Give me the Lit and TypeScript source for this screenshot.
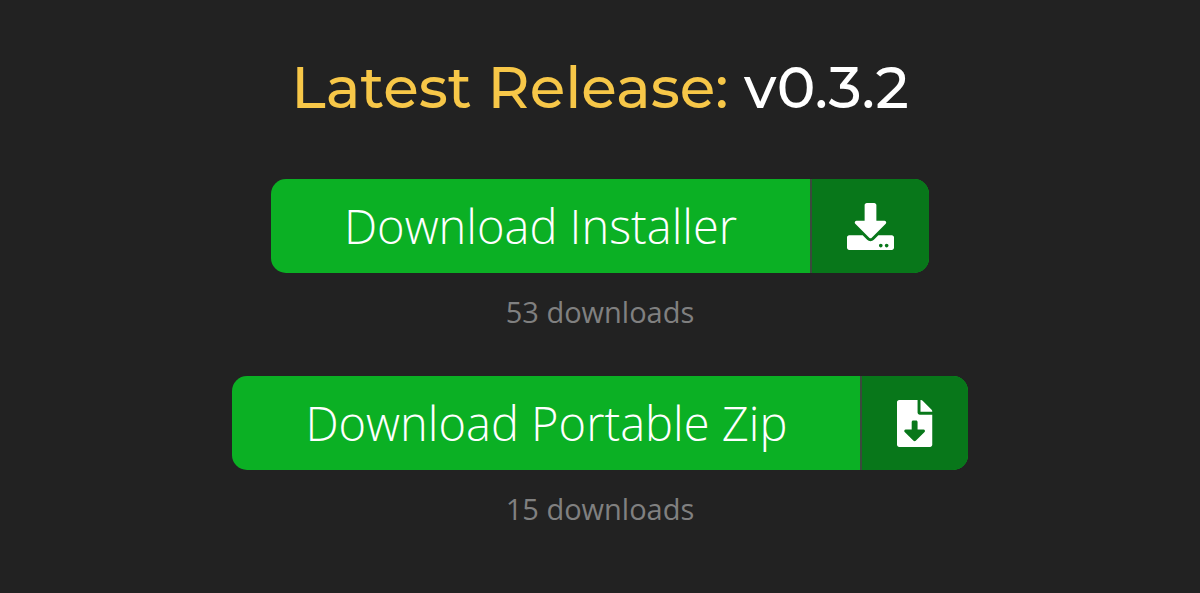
import { LitElement, html, css, svg } from "lit";
import { customElement, property } from "lit/decorators.js";

const driveIcon = svg`<path d="M216 0h80c13.300 0 24 10.700 24 24v168h87.700c17.800 0 26.700 21.500 14.100 34.100L269.700 378.300c-7.500 7.500-19.800 7.500-27.300 0L90.100 226.100c-12.600-12.600-3.700-34.100 14.100-34.100H192V24c0-13.300 10.700-24 24-24zm296 376v112c0 13.300-10.700 24-24 24H24c-13.300 0-24-10.700-24-24V376c0-13.300 10.700-24 24-24h146.700l49 49c20.100 20.100 52.500 20.100 72.600 0l49-49H488c13.300 0 24 10.700 24 24zm-124 88c0-11-9-20-20-20s-20 9-20 20 9 20 20 20 20-9 20-20zm64 0c0-11-9-20-20-20s-20 9-20 20 9 20 20 20 20-9 20-20z"/>`;
const fileIcon = svg`<path d="M224 136V0H24C10.700 0 0 10.700 0 24v464c0 13.300 10.700 24 24 24h336c13.300 0 24-10.700 24-24V160H248c-13.200 0-24-10.800-24-24zm76.450 211.360-96.420 95.700c-6.650 6.610-17.390 6.610-24.040 0l-96.420-95.700C73.420 337.290 80.540 320 94.820 320H160v-80c0-8.840 7.160-16 16-16h32c8.840 0 16 7.160 16 16v80h65.180c14.280 0 21.400 17.290 11.270 27.360zM377 105L279.100 7c-4.500-4.500-10.600-7-17-7H256v128h128v-6.100c0-6.300-2.500-12.400-7-16.900z"/>`;

@customElement("download-option")
class DownloadOption extends LitElement {
  @property() label = "";
  @property() kind = "drive";
  @property({ type: Number }) count = 0;

  static styles = css`
    :host { display: flex; flex-direction: column; align-items: center; }
    .button {
      display: flex;
      border-radius: 15px;
      overflow: hidden;
      color: #fff;
      text-decoration: none;
      background: #0bb024;
    }
    .label { padding: 0 73px; font-size: 47px; font-weight: 300; line-height: 94px; white-space: nowrap; }
    .icon {
      display: flex;
      align-items: center;
      padding: 0 35px;
      border-left: 2px solid #3a4a3c;
      background: #08771a;
    }
    svg { display: block; height: 47px; fill: currentColor; }
    .count { margin: 20px 0 0; font-size: 29px; line-height: 38px; color: #808080; }
  `;

  render() {
    const drive = this.kind === "drive";
    return html`
      <a class="button" href="#${this.kind}">
        <span class="label">${this.label}</span>
        <span class="icon">
          <svg viewBox=${drive ? "0 0 512 512" : "0 0 384 512"} aria-hidden="true">${drive ? driveIcon : fileIcon}</svg>
        </span>
      </a>
      <p class="count">${this.count} downloads</p>
    `;
  }
}

@customElement("app-root")
class AppRoot extends LitElement {
  static styles = css`
    :host {
      display: block;
      box-sizing: border-box;
      min-height: 100vh;
      padding: 52px 24px 24px;
      background: #222;
      font-family: "Open Sans", "Noto Sans", sans-serif;
    }
    .title {
      margin: 0 0 55px;
      font-family: Montserrat, Inter, sans-serif;
      font-size: 58px;
      font-weight: 500;
      line-height: 72px;
      text-align: center;
      color: #f7c748;
    }
    .version { color: #fff; }
    .downloads { display: grid; gap: 45px; }
  `;

  render() {
    return html`
      <main>
        <h1 class="title">Latest Release: <span class="version">v0.3.2</span></h1>
        <div class="downloads">
          <download-option label="Download Installer" kind="drive" count="53"></download-option>
          <download-option label="Download Portable Zip" kind="file" count="15"></download-option>
        </div>
      </main>
    `;
  }
}
